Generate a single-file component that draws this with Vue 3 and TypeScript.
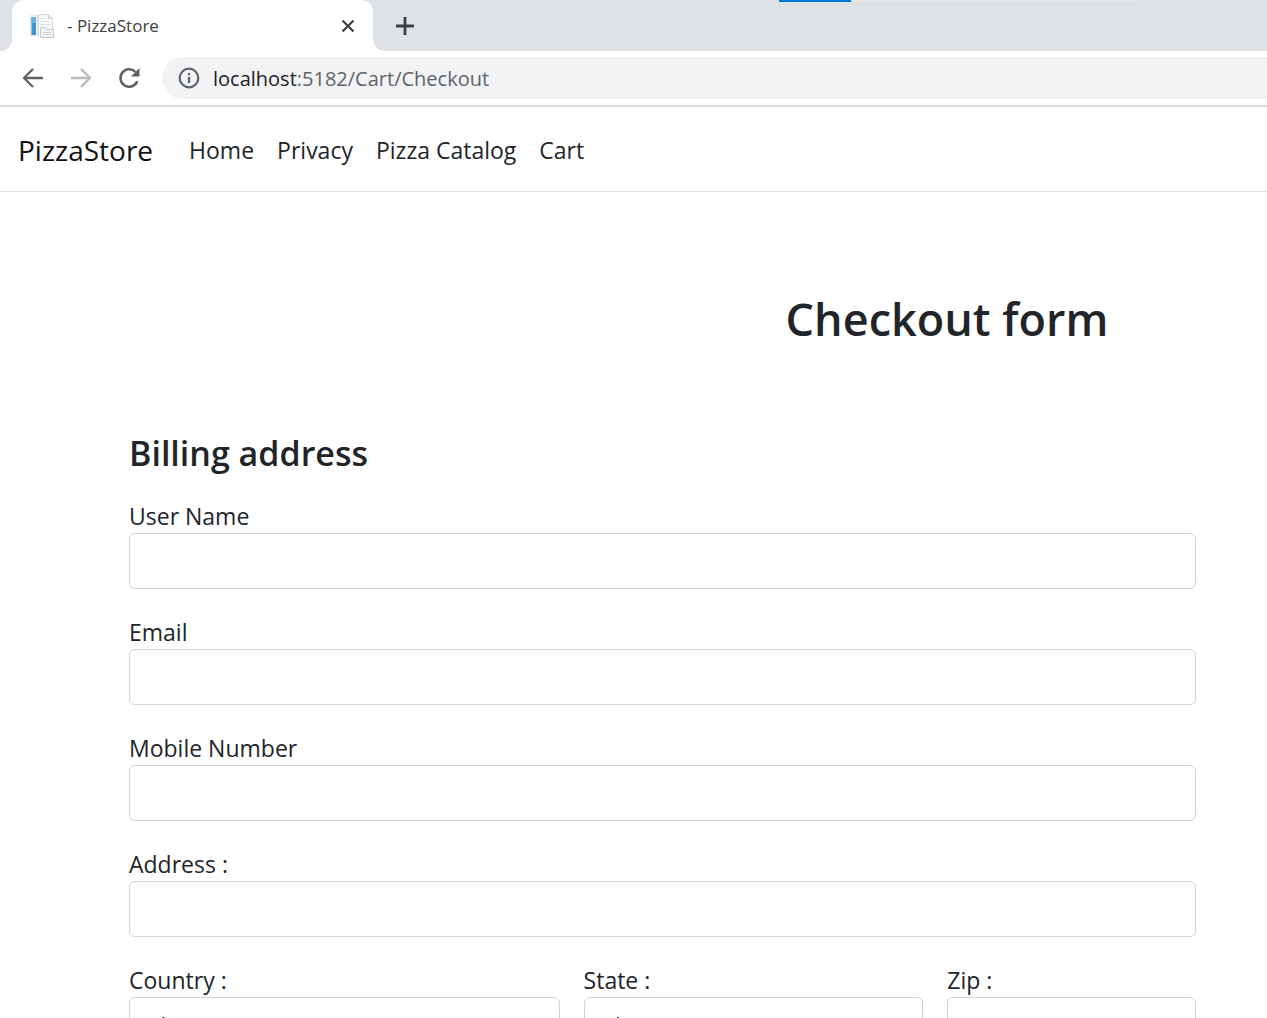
<script setup lang="ts">
import { ref } from 'vue'

interface NavLink {
  label: string
  href: string
}

interface Field {
  id: string
  label: string
  type: string
}

const links: NavLink[] = [
  { label: 'Home', href: '#home' },
  { label: 'Privacy', href: '#privacy' },
  { label: 'Pizza Catalog', href: '#catalog' },
  { label: 'Cart', href: '#cart' },
]

const fields: Field[] = [
  { id: 'userName', label: 'User Name', type: 'text' },
  { id: 'email', label: 'Email', type: 'email' },
  { id: 'mobile', label: 'Mobile Number', type: 'tel' },
  { id: 'address', label: 'Address :', type: 'text' },
]

const values = ref<Record<string, string>>({ userName: '', email: '', mobile: '', address: '' })
const country = ref('')
const state = ref('')
const zip = ref('')
</script>

<template>
  <div class="browser">
    <div class="tab-strip">
      <div class="progress"><span class="progress-done"></span></div>
      <div class="strip-edge"></div>
      <div class="tab">
        <svg class="favicon" width="24" height="24" viewBox="0 0 24 24" aria-hidden="true">
          <path d="M.5 1.500h7v20h-7z" fill="#f4f5f7" stroke="#e3e6ea" />
          <path d="M1.500 3h4.500v18H1.500z" fill="#3f93d2" />
          <path d="M1.500 3h4.500v6H1.500z" fill="#6fb0e2" />
          <path d="M8.500.5h10l4 4v17h-14z" fill="#f8f9fa" stroke="#d6dade" />
          <path d="M18.500.5v4h4" fill="#e4e8ec" stroke="#cdd2d8" />
          <path d="M10 4.500h6M10 7.500h10M10 10.500h10" stroke="#dde1e5" />
          <path d="M10.500 13.500h5l1 2h7v8h-13z" fill="#f1f3f6" stroke="#c5cad1" />
          <path d="M13 18.500h8v2h-8z" fill="#fff" stroke="#d0d4da" />
        </svg>
        <span class="tab-title">- PizzaStore</span>
        <button class="icon-button" type="button" aria-label="Close tab">
          <svg width="14" height="14" viewBox="0 0 14 14"><path d="M1.500 1.500l11 11M12.500 1.500l-11 11" stroke="#3c4043" stroke-width="2.200" /></svg>
        </button>
      </div>
      <div class="strip-rest">
        <button class="icon-button" type="button" aria-label="New tab">
          <svg width="18" height="18" viewBox="0 0 18 18"><path d="M9 0v18M0 9h18" stroke="#3c4043" stroke-width="2.800" /></svg>
        </button>
      </div>
    </div>

    <div class="toolbar">
      <button class="icon-button" type="button" aria-label="Back">
        <svg width="22" height="22" viewBox="0 0 22 22" fill="none" stroke="#5f6368" stroke-width="2.300"><path d="M21 11H2.500M11 2L2 11l9 9" /></svg>
      </button>
      <button class="icon-button" type="button" aria-label="Forward" disabled>
        <svg width="22" height="22" viewBox="0 0 22 22" fill="none" stroke="#babcbe" stroke-width="2.300"><path d="M1 11h18.500M11 2l9 9-9 9" /></svg>
      </button>
      <button class="icon-button" type="button" aria-label="Reload">
        <svg width="22" height="22" viewBox="0 0 22 22"><path d="M19.300 14.200A8.700 8.700 0 1 1 17.500 5" fill="none" stroke="#5f6368" stroke-width="2.500" /><path d="M21.500 1v8.500H13z" fill="#5f6368" /></svg>
      </button>
      <div class="address-bar">
        <svg width="22" height="22" viewBox="0 0 22 22" aria-hidden="true"><circle cx="11" cy="11" r="9.300" fill="none" stroke="#5f6368" stroke-width="2.200" /><path d="M11 10v6M11 6v2.300" stroke="#5f6368" stroke-width="2.300" /></svg>
        <span class="url"><span class="host">localhost</span>:5182/Cart/Checkout</span>
      </div>
    </div>

    <div class="page">
      <header class="navbar">
        <a class="brand" href="#home">PizzaStore</a>
        <nav class="links">
          <a v-for="link in links" :key="link.label" :href="link.href">{{ link.label }}</a>
        </nav>
      </header>

      <main>
        <h2 class="title">Checkout form</h2>
        <form class="billing" @submit.prevent>
          <h4>Billing address</h4>
          <div v-for="field in fields" :key="field.id" class="field">
            <label :for="field.id">{{ field.label }}</label>
            <input :id="field.id" v-model="values[field.id]" :type="field.type" />
          </div>
          <div class="region">
            <div class="field country">
              <label for="country">Country :</label>
              <select id="country" v-model="country">
                <option value="">Choose...</option>
              </select>
            </div>
            <div class="field state">
              <label for="state">State :</label>
              <select id="state" v-model="state">
                <option value="">Choose...</option>
              </select>
            </div>
            <div class="field zip">
              <label for="zip">Zip :</label>
              <input id="zip" v-model="zip" type="text" />
            </div>
          </div>
        </form>
      </main>
    </div>
  </div>
</template>

<style>
body {
  margin: 0;
  background: #fff;
}
</style>

<style scoped>
* {
  box-sizing: border-box;
}

.browser {
  display: flex;
  flex-direction: column;
  height: 100vh;
  overflow: hidden;
  color: #212529;
  font-family: "Open Sans", "Noto Sans", sans-serif;
  font-size: 23px;
}

.icon-button {
  display: flex;
  padding: 0;
  border: 0;
  background: none;
}

.tab-strip {
  position: relative;
  display: flex;
  flex: none;
  height: 51px;
  background: linear-gradient(#dee1e6 50%, #fff 50%);
}

.progress {
  position: absolute;
  top: 0;
  left: 779px;
  width: 359px;
  height: 2px;
  background: #e6e6e6;
}

.progress-done {
  display: block;
  width: 20%;
  height: 2px;
  background: #0078d7;
}

.strip-edge {
  width: 12px;
  background: #dee1e6;
  border-bottom-right-radius: 12px;
}

.tab {
  display: flex;
  align-items: center;
  width: 361px;
  padding: 0 18px;
  background: #fff;
  border-radius: 12px 12px 0 0;
}

.tab-title {
  flex: 1;
  margin-left: 13px;
  color: #3c4043;
  font-size: 17px;
}

.strip-rest {
  display: flex;
  flex: 1;
  align-items: center;
  padding-left: 23px;
  background: #dee1e6;
  border-bottom-left-radius: 12px;
}

.toolbar {
  display: flex;
  flex: none;
  gap: 26px;
  align-items: center;
  height: 56px;
  padding-left: 22px;
  border-bottom: 2px solid #dadcde;
}

.address-bar {
  display: flex;
  flex: 1;
  gap: 13px;
  align-items: center;
  height: 42px;
  margin-left: -4px;
  padding-left: 16px;
  background: #f1f3f4;
  border-radius: 21px 0 0 21px;
}

.url {
  color: #5f6368;
  font-size: 20px;
}

.host {
  color: #202124;
}

.page {
  flex: 1;
  min-height: 0;
  overflow: hidden;
}

.navbar {
  display: flex;
  gap: 36px;
  align-items: center;
  height: 85px;
  padding: 2px 18px 0;
  border-bottom: 1px solid #dee2e6;
}

.navbar a {
  color: #212529;
  text-decoration: none;
}

.navbar .brand {
  color: #111;
  font-size: 28px;
}

.links {
  display: flex;
  gap: 23px;
}

.title {
  margin: 98px 0 84px;
  padding-left: 627px;
  font-size: 45px;
  font-weight: 600;
  line-height: 58px;
  text-align: center;
}

.billing {
  padding: 0 71px 0 129px;
}

h4 {
  margin: 0 0 24px;
  font-size: 34px;
  font-weight: 600;
  line-height: 43px;
}

.field {
  display: flex;
  flex-direction: column;
  margin-bottom: 26px;
}

label {
  line-height: 34px;
}

input,
select {
  width: 100%;
  height: 56px;
  padding: 0 18px;
  color: #212529;
  font: inherit;
  background: #fff;
  border: 1px solid #ced4da;
  border-radius: 6px;
  appearance: none;
}

select {
  padding: 2px 16px 0;
}

.region {
  display: grid;
  grid-template-columns: repeat(12, 1fr);
  gap: 24px;
}

.country {
  grid-column: span 5;
}

.state {
  grid-column: span 4;
}

.zip {
  grid-column: span 3;
}
</style>
